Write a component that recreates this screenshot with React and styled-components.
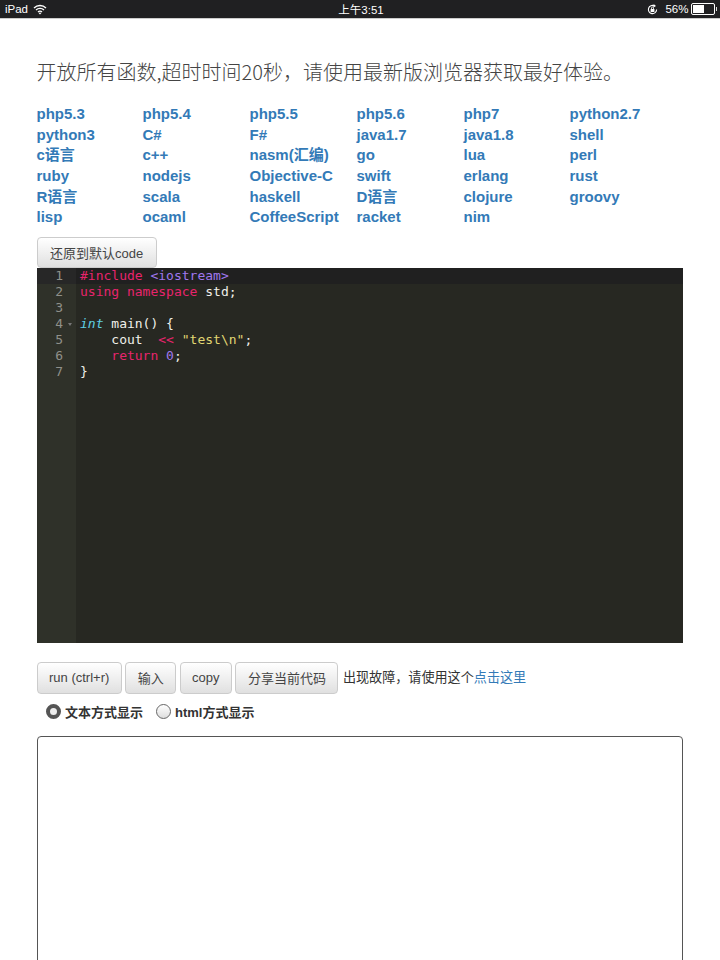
import React from 'react'
import styled, { createGlobalStyle } from 'styled-components'

const links = [
  'php5.3', 'php5.4', 'php5.5', 'php5.6', 'php7', 'python2.7',
  'python3', 'C#', 'F#', 'java1.7', 'java1.8', 'shell',
  'c语言', 'c++', 'nasm(汇编)', 'go', 'lua', 'perl',
  'ruby', 'nodejs', 'Objective-C', 'swift', 'erlang', 'rust',
  'R语言', 'scala', 'haskell', 'D语言', 'clojure', 'groovy',
  'lisp', 'ocaml', 'CoffeeScript', 'racket', 'nim',
]

const code = [
  [['pink', '#include '], ['purple', '<iostream>']],
  [['pink', 'using namespace '], ['white', 'std;']],
  [],
  [['cyan', 'int'], ['white', ' main() {']],
  [['white', '    cout  '], ['pink', '<<'], ['white', ' '], ['yellow', '"test\\n"'], ['white', ';']],
  [['white', '    '], ['pink', 'return'], ['white', ' '], ['purple', '0'], ['white', ';']],
  [['white', '}']],
]

const tokenColors = {
  pink: '#e8246d',
  purple: '#a078ee',
  white: '#f0f0ea',
  yellow: '#e0d672',
  cyan: '#5fcfe2',
}

function App() {
  return (
    <Page>
      <GlobalStyle />
      <StatusBar>
        <StatusSide>
          <span>iPad</span>
          <svg width="14" height="11" viewBox="0 0 14 11">
            <path d="M1 4a8.5 8.5 0 0 1 12 0M3 6a5.6 5.6 0 0 1 8 0M5 8a2.8 2.8 0 0 1 4 0" fill="none" stroke="#fff" strokeWidth="1.3" />
            <path d="M7 10.6 5.6 9.1a2 2 0 0 1 2.8 0z" fill="#fff" />
          </svg>
        </StatusSide>
        <Clock>上午3:51</Clock>
        <StatusRight>
          <svg width="11" height="11" viewBox="0 0 11 11">
            <path d="M9.6 5.5A4.1 4.1 0 1 1 7.4 1.9" fill="none" stroke="#fff" strokeWidth="1.1" />
            <path d="M6.6 0 9 2 6.4 3.4z" fill="#fff" />
            <rect x="3.6" y="5" width="3.8" height="3" fill="#fff" />
            <path d="M4.5 5V4a1 1 0 0 1 2 0v1" fill="none" stroke="#fff" strokeWidth=".8" />
          </svg>
          <Percent>56%</Percent>
          <Battery><BatteryFill /></Battery>
          <BatteryCap />
        </StatusRight>
      </StatusBar>

      <Content>
        <Title>开放所有函数,超时时间20秒，请使用最新版浏览器获取最好体验。</Title>
        <LinkGrid>
          {links.map((name) => <LangLink key={name}>{name}</LangLink>)}
        </LinkGrid>
        <ResetButton>还原到默认code</ResetButton>
        <Editor>
          <Gutter>
            {code.map((_, i) => (
              <LineNo key={i} $active={i === 0}>
                {i + 1}
                {i === 3 && <Fold />}
              </LineNo>
            ))}
          </Gutter>
          <CodeArea>
            {code.map((line, i) => (
              <CodeLine key={i} $active={i === 0}>
                {line.map(([kind, text], j) => (
                  <Token key={j} $color={tokenColors[kind]} $italic={kind === 'cyan'}>{text}</Token>
                ))}
              </CodeLine>
            ))}
          </CodeArea>
        </Editor>
        <Actions>
          <Button>run (ctrl+r)</Button>
          <Button>输入</Button>
          <Button>copy</Button>
          <Button>分享当前代码</Button>
          <Notice>出现故障，请使用这个<NoticeLink>点击这里</NoticeLink></Notice>
        </Actions>
        <RadioRow>
          <RadioLabel><Radio $checked />文本方式显示</RadioLabel>
          <RadioLabel><Radio />html方式显示</RadioLabel>
        </RadioRow>
        <Output />
      </Content>
    </Page>
  )
}

const GlobalStyle = createGlobalStyle`
  html, body {
    margin: 0;
    height: 960px;
    overflow: hidden;
    background: #fff;
    font-family: "Liberation Sans", "Noto Sans CJK SC", sans-serif;
  }
`

const Page = styled.div`
  width: 720px;
  height: 960px;
  overflow: hidden;
`

const StatusBar = styled.div`
  height: 18px;
  background: #202022;
  border-bottom: 1px solid #ccc;
  color: #fff;
  font-size: 11.5px;
  padding: 0 3px 0 5px;
  display: grid;
  grid-template-columns: 1fr auto 1fr;
  align-items: center;
`

const StatusSide = styled.div`
  display: flex;
  align-items: center;
  gap: 5px;
`

const StatusRight = styled(StatusSide)`
  justify-content: flex-end;
  gap: 0;
`

const Clock = styled.div`
  font-size: 11.5px;
`

const Percent = styled.span`
  margin: 0 2px 0 7px;
`

const Battery = styled.div`
  width: 20px;
  height: 8px;
  border: 1px solid #fff;
  border-radius: 2px;
  padding: 1px;
`

const BatteryFill = styled.div`
  width: 56%;
  height: 100%;
  background: #fff;
`

const BatteryCap = styled.div`
  width: 1.5px;
  height: 4px;
  margin-left: 1px;
  background: #ddd;
`

const Content = styled.div`
  padding: 0 37px 0 36.5px;
`

const Title = styled.h1`
  margin: 39px 0 0;
  height: 28px;
  font-family: "Noto Sans CJK SC", sans-serif;
  font-size: 20px;
  line-height: 28px;
  font-weight: 300;
  color: #444;
  white-space: nowrap;
`

const LinkGrid = styled.div`
  margin-top: 18px;
  display: grid;
  grid-template-columns: 106px 107px 107px 107px 106px 1fr;
  grid-auto-rows: 20.7px;
`

const LangLink = styled.a`
  font-size: 15px;
  line-height: 20.7px;
  font-weight: 700;
  color: #337ab7;
  white-space: nowrap;
`

const Button = styled.button`
  height: 32px;
  padding: 0 11.5px;
  font-family: inherit;
  font-size: 13px;
  color: #444;
  background: linear-gradient(#fff, #e0e0e0);
  border: 1px solid #ccc;
  border-radius: 4px;
  white-space: nowrap;
  flex: none;
`

const ResetButton = styled(Button)`
  display: block;
  height: 31px;
  margin-top: 8.8px;
  padding: 0 12.5px;
`

const Editor = styled.div`
  height: 375px;
  display: flex;
  background: #272822;
  font-family: "DejaVu Sans Mono", monospace;
  font-size: 13px;
  line-height: 16px;
`

const Gutter = styled.div`
  width: 39.5px;
  flex: none;
  background: #2f3129;
  color: #8f908a;
`

const LineNo = styled.div`
  position: relative;
  height: 16px;
  padding-right: 13px;
  text-align: right;
  background: ${(p) => (p.$active ? '#272727' : 'transparent')};
`

const Fold = styled.span`
  position: absolute;
  right: 4px;
  top: 7px;
  border-left: 2.5px solid transparent;
  border-right: 2.5px solid transparent;
  border-top: 3px solid #777;
`

const CodeArea = styled.div`
  flex: 1;
`

const CodeLine = styled.div`
  height: 16px;
  padding-left: 4px;
  white-space: pre;
  background: ${(p) => (p.$active ? '#202020' : 'transparent')};
`

const Token = styled.span`
  color: ${(p) => p.$color};
  font-style: ${(p) => (p.$italic ? 'italic' : 'normal')};
`

const Actions = styled.div`
  margin-top: 19px;
  display: flex;
  align-items: center;
  gap: 3.4px;
`

const Notice = styled.span`
  font-size: 13.1px;
  color: #333;
  white-space: nowrap;
  margin: 0 0 2px 1px;
`

const NoticeLink = styled.a`
  color: #337ab7;
`

const RadioRow = styled.div`
  margin-top: 8.5px;
  height: 19px;
  padding-left: 9.5px;
  display: flex;
  align-items: center;
  gap: 13px;
`

const RadioLabel = styled.label`
  display: flex;
  align-items: center;
  gap: 4px;
  font-size: 13px;
  font-weight: 700;
  color: #333;
`

const Radio = styled.span`
  box-sizing: border-box;
  width: 15px;
  height: 15px;
  border-radius: 50%;
  border: ${(p) => (p.$checked ? '4px solid #555' : '1px solid #666')};
  background: ${(p) => (p.$checked ? '#eee' : 'linear-gradient(#fff, #ddd)')};
`

const Output = styled.div`
  margin-top: 14.5px;
  height: 300px;
  border: 1px solid #555;
  border-radius: 4px;
  background: #fff;
`

export default App
